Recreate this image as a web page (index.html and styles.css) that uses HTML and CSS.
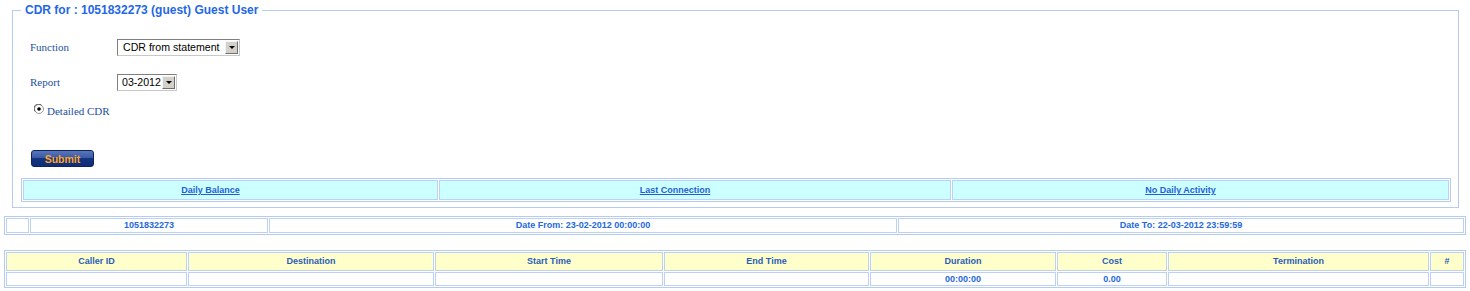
FILE: index.html
```html
<!DOCTYPE html>
<html>
<head>
<meta charset="utf-8">
<title>CDR</title>
<link rel="stylesheet" href="styles.css">
</head>
<body>
<fieldset class="panel">
  <legend class="panel-title">CDR for : 1051832273 (guest) Guest User</legend>
  <form class="form">
    <div class="row row-func">
      <span class="lbl">Function</span>
      <div class="select w-func">
        <span class="select-value">CDR from statement</span>
        <span class="select-btn"><svg width="6" height="4" viewBox="0 0 6 4"><path d="M0 0h6L3 3z" fill="#000"/></svg></span>
      </div>
    </div>
    <div class="row row-report">
      <span class="lbl">Report</span>
      <div class="select w-report">
        <span class="select-value">03-2012</span>
        <span class="select-btn"><svg width="6" height="4" viewBox="0 0 6 4"><path d="M0 0h6L3 3z" fill="#000"/></svg></span>
      </div>
    </div>
    <div class="radio-row">
      <svg class="radio" width="10" height="10" viewBox="0 0 10 10">
        <circle cx="5" cy="5" r="4.5" fill="#fff" stroke="#9a9a9a"/>
        <path d="M1.3 7.5A4.3 4.3 0 0 1 7.5 1.3" fill="none" stroke="#555" stroke-width="1"/>
        <circle cx="5" cy="5" r="1.8" fill="#000"/>
      </svg>
      <span class="lbl">Detailed CDR</span>
    </div>
    <button type="button" class="submit">Submit</button>
  </form>
  <table class="grid links">
    <colgroup><col class="c-l1"><col class="c-l2"><col></colgroup>
    <tr>
      <td><a href="#">Daily Balance</a></td>
      <td><a href="#">Last Connection</a></td>
      <td><a href="#">No Daily Activity</a></td>
    </tr>
  </table>
</fieldset>
<table class="grid info">
  <colgroup><col class="c-i1"><col class="c-i2"><col class="c-i3"><col></colgroup>
  <tr>
    <td></td>
    <td>1051832273</td>
    <td>Date From: 23-02-2012 00:00:00</td>
    <td>Date To: 22-03-2012 23:59:59</td>
  </tr>
</table>
<table class="grid cdr">
  <colgroup>
    <col class="c-c1"><col class="c-c2"><col class="c-c3"><col class="c-c4">
    <col class="c-c5"><col class="c-c6"><col class="c-c7"><col>
  </colgroup>
  <tr class="head">
    <th>Caller ID</th><th>Destination</th><th>Start Time</th><th>End Time</th>
    <th>Duration</th><th>Cost</th><th>Termination</th><th>#</th>
  </tr>
  <tr class="data">
    <td></td><td></td><td></td><td></td>
    <td>00:00:00</td><td>0.00</td><td></td><td></td>
  </tr>
</table>
</body>
</html>
```
FILE: styles.css
```css
html, body {
  margin: 0;
  padding: 0;
  background: #fff;
}
body {
  padding-top: 3px;
  font-family: "Liberation Sans", Arial, sans-serif;
}
.panel {
  margin: 0 11px 0 12px;
  border: 1px solid #b4cbf3;
  padding: 0 7px 5px 8px;
  min-width: 0;
}
.panel-title {
  padding: 0 4px;
  font: bold 12px/14px "Liberation Sans", Arial, sans-serif;
  color: #2467e6;
}
.form {
  margin: 0;
  padding: 22px 0 0 9px;
}
.row {
  display: flex;
  align-items: center;
  height: 17px;
}
.row-report {
  margin-top: 18px;
}
.lbl {
  font: 11px/13px "Liberation Serif", "Times New Roman", serif;
  color: #224f9f;
}
.row .lbl {
  width: 87px;
}
.select {
  display: flex;
  align-items: center;
  justify-content: space-between;
  box-sizing: border-box;
  height: 17px;
  border: 1px solid #7f7f7f;
  border-right-color: #c8c8c8;
  border-bottom-color: #c8c8c8;
  background: #fff;
  padding: 0 1px 0 5px;
}
.w-func { width: 123px; }
.w-report { width: 60px; padding-left: 4px; }
.select-value {
  font: 10.6px/15px "Liberation Sans", Arial, sans-serif;
  color: #000;
  white-space: nowrap;
}
.select-btn {
  display: flex;
  align-items: center;
  justify-content: center;
  box-sizing: border-box;
  width: 13px;
  height: 13px;
  background: #d4d0c8;
  border: 1px solid;
  border-color: #f4f4f4 #6f6f6f #6f6f6f #f4f4f4;
}
.select-btn svg {
  display: block;
  margin-top: 1px;
}
.radio-row {
  display: flex;
  align-items: flex-start;
  margin-top: 13px;
  padding-left: 4px;
  height: 13px;
}
.radio {
  display: block;
  margin-right: 3px;
}
.radio-row .lbl {
  padding-top: 1px;
}
.submit {
  display: block;
  margin: 33px 0 0 1px;
  box-sizing: border-box;
  width: 63px;
  height: 17px;
  padding: 0;
  border: 1px solid #0c2462;
  border-radius: 3px;
  background: linear-gradient(#5876bd 0%, #3b5aa6 45%, #15347f 50%, #0f2d78 100%);
  font: bold 10.5px/14px "Liberation Sans", Arial, sans-serif;
  color: #ffa526;
  cursor: pointer;
}
.grid {
  border: 1px solid #b4cbf3;
  border-spacing: 1px;
  table-layout: fixed;
  font: bold 9px "Liberation Sans", Arial, sans-serif;
  color: #2568e0;
}
.grid td, .grid th {
  border: 1px solid #bcd1f5;
  padding: 0;
  text-align: center;
  white-space: nowrap;
}
.links {
  margin-top: 11px;
  width: 100%;
}
.links td {
  background: #ccffff;
  line-height: 18px;
  padding-right: 40px;
}
.links a {
  color: #1f5fd8;
  text-decoration: underline;
}
.c-l1 { width: 415px; }
.c-l2 { width: 512px; }
.info {
  margin: 8px 4px 0 4px;
  width: calc(100% - 8px);
}
.info td {
  line-height: 13px;
}
.c-i1 { width: 23px; }
.c-i2 { width: 238px; }
.c-i3 { width: 628px; }
.cdr {
  margin: 15px 4px 0 4px;
  width: calc(100% - 8px);
}
.cdr .head th {
  background: #ffffcc;
  color: #2a5cb8;
  font-weight: bold;
  line-height: 17px;
}
.cdr .data td {
  line-height: 12px;
}
.c-c1 { width: 181px; }
.c-c2 { width: 246px; }
.c-c3 { width: 228px; }
.c-c4 { width: 205px; }
.c-c5 { width: 186px; }
.c-c6 { width: 110px; }
.c-c7 { width: 261px; }
```
